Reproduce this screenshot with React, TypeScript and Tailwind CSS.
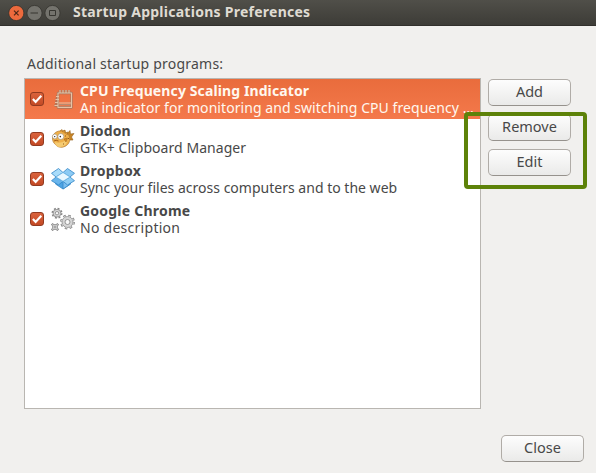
import type { ReactNode } from "react";

function CheckBox() {
  return (
    <span className="flex h-[14px] w-[14px] shrink-0 items-center justify-center rounded-[3px] border border-[#923a20] bg-gradient-to-b from-[#d9623c] to-[#c34a25]">
      <svg width="12" height="12" viewBox="0 0 13 13" fill="none" stroke="#fff" strokeWidth="2.3">
        <path d="M2 6.6 5 9.6 11.2 3" />
      </svg>
    </span>
  );
}

function ChipIcon() {
  return (
    <svg width="24" height="24" viewBox="0 0 24 24" fill="none" strokeLinejoin="round">
      <g stroke="#a8745c" strokeWidth="2.4">
        <path d="M7 6H20.500V20.500H7Z" />
        <path d="M9 3V6M12 3V6M15 3V6M18 3V6M5 9.500H8M4.500 12.500H8M4 15.500H7M3.500 18.500H7" />
      </g>
      <g stroke="#e6c3a6" strokeWidth="1.100">
        <path d="M7 6H20.500V20.500H7Z" />
        <path d="M9 3V6M12 3V6M15 3V6M18 3V6M5 9.500H8M4.500 12.500H8M4 15.500H7M3.500 18.500H7" />
      </g>
      <path d="M8 16H20" stroke="#e6c3a6" />
      <path d="M8 17.500H20M8 19.300H20" stroke="#b98a70" />
    </svg>
  );
}

function FishIcon() {
  return (
    <svg width="24" height="24" viewBox="0 0 24 24">
      <path d="M15 8 19 3.500 19.500 7 23 6.500 20.500 10 22 13 17 13Z" fill="#c98524" stroke="#96621c" strokeWidth=".6" />
      <path d="M1.500 11C2 6 6 3.500 11 4L14 3.500 14.500 5.500 17 7C20 11 19 16 15.500 18.500 12 21 7 21 4.500 17.500 2.500 16 1.500 14 1.500 11Z" fill="#efb04a" stroke="#b27a30" strokeWidth=".7" />
      <path d="M3.500 15C7 16.500 12 16 16 12 17 17 13 20 9 20 6 20 4.500 18 3.500 15Z" fill="#f5cb72" />
      <path d="M9 4 11 2.500 11.500 4.500 14 3 14 6 17 5 16 8" fill="#dd9a38" stroke="#9c6823" strokeWidth=".6" />
      <circle cx="3.800" cy="9.500" r="2.400" fill="#fff" stroke="#9b896b" strokeWidth=".6" />
      <circle cx="9.800" cy="9.500" r="3" fill="#fff" stroke="#9b896b" strokeWidth=".6" />
      <circle cx="3.700" cy="9.600" r=".7" fill="#222" />
      <circle cx="9.300" cy="9.600" r=".8" fill="#222" />
      <path d="M3 14Q5 12.500 7.500 14" fill="none" stroke="#a65e16" />
      <path d="M13 12 16.500 11 15 15Z" fill="#d88c22" stroke="#9c6018" strokeWidth=".5" />
      <path d="M14 9H15M17 11.500H18M12 17H13" stroke="#8f571b" />
    </svg>
  );
}

function DropboxIcon() {
  return (
    <svg width="24" height="24" viewBox="0 0 24 24" stroke="#3586c6" strokeWidth=".8" strokeLinejoin="round">
      <path d="M4.500 13V17L12 22 19.500 17V13L12 9Z" fill="#4ba3e4" />
      <path d="M12 9V22L19.500 17V13Z" fill="#7abef0" />
      <path d="M7.500 1.500 12 5.500 5 10 .5 6.300Z" fill="#a9dcfa" />
      <path d="M16.500 1.500 12 5.500 19 10 23.500 6.300Z" fill="#8bcaf4" />
      <path d="M5 10 12 14.300 7.500 18 .5 13.700Z" fill="#69b5ec" />
      <path d="M19 10 12 14.300 16.500 18 23.500 13.700Z" fill="#90cef5" />
      <path d="M12 5.500 19 10 12 14.300 5 10Z" fill="#e9f7ff" stroke="#70b7e6" />
    </svg>
  );
}

function GearsIcon() {
  return (
    <svg width="24" height="24" viewBox="0 0 24 24" fill="none">
      <g stroke="#858585">
        <circle cx="16.500" cy="15" r="5.900" strokeWidth="3" strokeDasharray="2.300 2.330" />
        <circle cx="6" cy="6.200" r="4.200" strokeWidth="2.600" strokeDasharray="1.700 1.600" />
        <path d="M.8 16.800 7.200 23.200M7.200 16.800 .8 23.200" strokeWidth="2.600" />
      </g>
      <g fill="#d5d5d5" stroke="#8e8e8e" strokeWidth=".8">
        <circle cx="16.500" cy="15" r="5.500" />
        <circle cx="6" cy="6.200" r="3.900" />
        <circle cx="4" cy="20" r="2.600" />
      </g>
      <g stroke="#cdcdcd">
        <circle cx="16.500" cy="15" r="5.900" strokeWidth="1.500" strokeDasharray="1.300 3.330" strokeDashoffset="-.5" />
        <path d="M1.300 17.300 6.700 22.700M6.700 17.300 1.300 22.700" strokeWidth="1.200" />
      </g>
      <g fill="#f7f7f7" stroke="#858585" strokeWidth=".8">
        <circle cx="16.500" cy="15" r="2.500" />
        <circle cx="6" cy="6.200" r="1.700" />
        <circle cx="4" cy="20" r=".9" />
      </g>
    </svg>
  );
}

type RowProps = {
  icon: ReactNode;
  name: string;
  nameClass: string;
  description: string;
  descriptionClass: string;
  selected?: boolean;
};

function Row({ icon, name, nameClass, description, descriptionClass, selected }: RowProps) {
  return (
    <div
      className={`flex h-10 items-center pl-[5px] ${
        selected ? "bg-gradient-to-b from-[#e96c3c] to-[#f4794b] text-[#fff8ef]" : "text-[#484848]"
      }`}
    >
      <CheckBox />
      <span className="ml-[7px] shrink-0">{icon}</span>
      <div className="ml-[5px] flex flex-col pb-px text-[14px] leading-[17px] whitespace-nowrap">
        <span className={`font-bold ${nameClass}`}>{name}</span>
        <span className={descriptionClass}>{description}</span>
      </div>
    </div>
  );
}

function Button({ children }: { children: string }) {
  return (
    <button className="flex h-[27px] w-[83px] justify-center rounded-[5px] border border-[#b0aca7] border-b-[#96928d] bg-gradient-to-b from-[#fdfdfd] to-[#eaeae9] text-[14.500px] leading-[23px] text-[#484848]">
      {children}
    </button>
  );
}

export default function App() {
  return (
    <div className="relative flex h-[473px] w-[596px] flex-col overflow-hidden bg-[#f1f0ee] font-['Noto_Sans',sans-serif]">
      <header className="flex h-[26px] shrink-0 items-center border-b border-[#31302c] bg-gradient-to-b from-[#504f49] to-[#3d3c37] pl-[8px]">
        <svg width="54" height="18" viewBox="0 0 54 18" fill="none">
          <circle cx="8.300" cy="9" r="7.600" fill="#ed6a3d" stroke="#35342f" strokeWidth=".8" />
          <path d="M6 6.700 10.600 11.300M10.600 6.700 6 11.300" stroke="#4d2717" strokeWidth="1.200" />
          <circle cx="26.500" cy="9" r="7.600" fill="#74736d" stroke="#35342f" strokeWidth=".8" />
          <path d="M22.500 9H30" stroke="#373631" />
          <circle cx="44.500" cy="9" r="7.600" fill="#74736d" stroke="#35342f" strokeWidth=".8" />
          <path d="M41.500 6.500H47.500V11.500H41.500Z" stroke="#373631" />
        </svg>
        <h1 className="ml-[11px] pb-[2px] text-[14px] leading-[20px] font-bold tracking-[0.26px] whitespace-nowrap text-[#dfdbd2]">
          Startup Applications Preferences
        </h1>
      </header>
      <main className="flex flex-1 flex-col pt-[28px] pr-[12px] pb-[11px] pl-[24px]">
        <div className="h-[24px] pl-[3px] text-[14px] leading-[20px] tracking-[0.22px] whitespace-nowrap text-[#484848]">
          Additional startup programs:
        </div>
        <div className="flex gap-[7px]">
          <section className="h-[331px] w-[457px] overflow-hidden border border-[#b9b6b1] bg-white">
            <Row
              selected
              icon={<ChipIcon />}
              name="CPU Frequency Scaling Indicator"
              nameClass="tracking-[0.11px]"
              description="An indicator for monitoring and switching CPU frequency …"
              descriptionClass="tracking-[0.06px]"
            />
            <Row
              icon={<FishIcon />}
              name="Diodon"
              nameClass="tracking-[0.15px]"
              description="GTK+ Clipboard Manager"
              descriptionClass="tracking-[0.05px]"
            />
            <Row
              icon={<DropboxIcon />}
              name="Dropbox"
              nameClass="tracking-[0.25px]"
              description="Sync your files across computers and to the web"
              descriptionClass="tracking-[0.01px]"
            />
            <Row
              icon={<GearsIcon />}
              name="Google Chrome"
              nameClass="tracking-[0.22px]"
              description="No description"
              descriptionClass="tracking-[0.27px]"
            />
          </section>
          <div className="flex flex-col gap-[8px] pt-px">
            <Button>Add</Button>
            <Button>Remove</Button>
            <Button>Edit</Button>
          </div>
        </div>
        <div className="mt-auto flex justify-end">
          <Button>Close</Button>
        </div>
      </main>
      <div className="pointer-events-none absolute top-[112px] left-[464px] h-[77px] w-[123px] rounded-[4px] border-4 border-[#5d8209]" />
    </div>
  );
}
